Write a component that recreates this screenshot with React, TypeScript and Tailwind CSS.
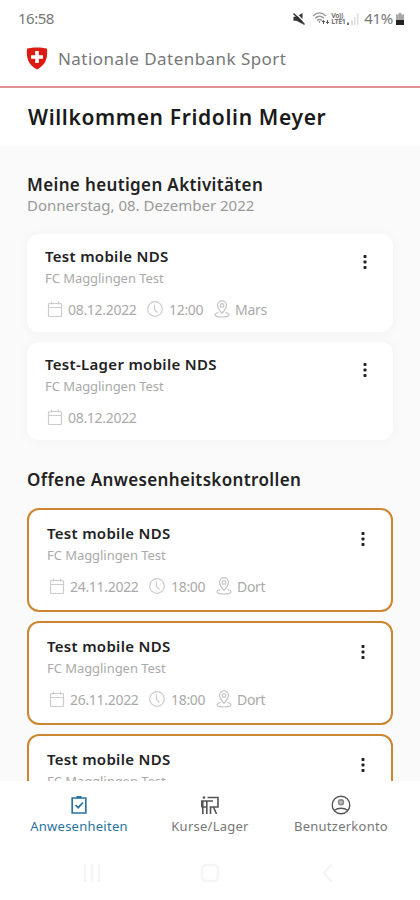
import React from 'react';

interface Activity {
  title: string;
  club: string;
  date?: string;
  time?: string;
  place?: string;
}

const todayActivities: Activity[] = [
  { title: 'Test mobile NDS', club: 'FC Magglingen Test', date: '08.12.2022', time: '12:00', place: 'Mars' },
  { title: 'Test-Lager mobile NDS', club: 'FC Magglingen Test', date: '08.12.2022' },
];

const openChecks: Activity[] = [
  { title: 'Test mobile NDS', club: 'FC Magglingen Test', date: '24.11.2022', time: '18:00', place: 'Dort' },
  { title: 'Test mobile NDS', club: 'FC Magglingen Test', date: '26.11.2022', time: '18:00', place: 'Dort' },
  { title: 'Test mobile NDS', club: 'FC Magglingen Test' },
];

const CalendarIcon = () => (
  <svg width="16" height="16" viewBox="0 0 16 16" fill="none" stroke="currentColor" strokeWidth="1.2" className="shrink-0">
    <rect x="1.5" y="2.5" width="13" height="13" rx="1" />
    <path d="M1.5 6.5h13M4.5 0.5v3M11.5 0.5v3" />
  </svg>
);

const ClockIcon = () => (
  <svg width="16" height="16" viewBox="0 0 16 16" fill="none" stroke="currentColor" strokeWidth="1.2" className="shrink-0">
    <circle cx="8" cy="8" r="7.3" />
    <path d="M7.5 3.5v5l3 3" />
  </svg>
);

const PlaceIcon = () => (
  <svg width="16" height="18" viewBox="0 0 16 18" fill="none" stroke="currentColor" strokeWidth="1.2" className="shrink-0">
    <path d="M8 13.5C6.3 11 3.5 8.5 3.5 5.3a4.5 4.5 0 0 1 9 0C12.5 8.5 9.7 11 8 13.5Z" />
    <circle cx="8" cy="5.5" r="1.8" />
    <path d="M4.5 12.5C2.5 13 1 13.6 1 14.7c0 1.4 3 2.3 7 2.3s7-.9 7-2.3c0-1.1-1.5-1.7-3.5-2.2" />
  </svg>
);

const StatusBar = () => (
  <div className="flex h-9 shrink-0 items-center justify-between pl-[18px] pr-[16px] pt-px text-[#777]">
    <span className="text-[15px] tracking-[-0.5px]">16:58</span>
    <div className="flex items-center">
      <svg width="13" height="12" viewBox="0 0 13 12" className="mr-[6px]">
        <path d="M0.5 3.8h3L9.5 0v11L3.5 7.8h-3z" fill="#333" />
        <path d="M2 -0.5l11 11" stroke="#fff" strokeWidth="1.5" />
        <path d="M0.5 0.5l11 11" stroke="#333" strokeWidth="1.5" />
      </svg>
      <svg width="18" height="13" viewBox="0 0 18 13" fill="none" stroke="#999" strokeWidth="1.3">
        <path d="M1 4c4-4 9-4 13 0M3 6.3c3-2.7 6-2.7 9 0M5 8.6c2-1.500 3.500-1.500 5 0" />
        <path d="M7.5 9v2" />
        <path d="M11.5 12V8.5M10 10l1.5-1.5L13 10M15.500 8v3.500M14 10l1.500 1.500L17 10" stroke="#555" strokeWidth="1" />
      </svg>
      <span className="ml-px flex flex-col text-[7px] font-bold leading-[6px] tracking-[-0.4px] text-[#777]">
        <span className="h-[6px]">Vo))</span>
        <span className="h-[6px]">LTE1</span>
      </span>
      <svg width="12" height="12" viewBox="0 0 12 12" fill="#ddd" className="ml-[2px]">
        <path d="M0 9.5h2V12H0z" fill="#777" />
        <path d="M4 7.5h1.8V12H4zM7 4h1.500v8H7zM10 0h1.500v12H10z" />
      </svg>
      <span className="ml-[5px] text-[15px] tracking-[-0.3px]">41%</span>
      <svg width="8" height="12" viewBox="0 0 8 12" className="ml-[3px]">
        <path d="M2.5 0h3v1.5H8V7H0V1.5h2.5z" fill="#aaa" />
        <path d="M0 7h8v5H0z" fill="#222" />
      </svg>
    </div>
  </div>
);

const Header = () => (
  <header className="flex h-[52px] shrink-0 items-center border-b-2 border-[#df9294] pb-[5px] pl-[26px]">
    <svg width="22" height="23" viewBox="0 0 22 23">
      <path d="M1 1.5C7 0 15 0 21 1.5c.8 8.5-.5 16-10 21C1.5 17.5.2 10 1 1.5Z" fill="#dc1c13" />
      <path d="M9.200 4h3.600v4.200h4.200v3.600h-4.200v4.200H9.200v-4.200H5V8.200h4.200z" fill="#fff" />
    </svg>
    <span className="ml-[10px] text-[17px] tracking-[0.45px] text-[#777]">Nationale Datenbank Sport</span>
  </header>
);

const ActivityCard = ({ activity, open }: { activity: Activity; open?: boolean }) => (
  <div
    className={
      open
        ? 'h-[104px] shrink-0 rounded-xl border-2 border-[#cd862f] bg-white pl-[18px] pr-[22px] pt-[13px]'
        : 'h-[98px] shrink-0 rounded-xl bg-white pl-[18px] pr-[22px] pt-[12px] shadow-[0_0_14px_rgba(0,0,0,0.035)]'
    }
  >
    <div className="flex justify-between">
      <div>
        <h3 className="text-[15px] font-semibold leading-5 tracking-[0.3px] text-[#222]">{activity.title}</h3>
        <p className="mt-[2px] text-[13px] leading-5 tracking-[-0.05px] text-[#aaa]">{activity.club}</p>
      </div>
      <svg width="12" height="16" viewBox="0 0 12 16" fill="#222" className="mt-[8px]">
        <rect x="4.5" y="1" width="3" height="3" rx="0.8" />
        <rect x="4.5" y="6.5" width="3" height="3" rx="0.8" />
        <rect x="4.5" y="12" width="3" height="3" rx="0.8" />
      </svg>
    </div>
    {activity.date && (
      <div className="mt-[11px] flex h-5 items-center text-[14px] tracking-[-0.3px] text-[#aaa]">
        <span className="ml-[2px] text-[#ccc]"><CalendarIcon /></span>
        <span className="ml-[5px] w-[69px]">{activity.date}</span>
        {activity.time && (
          <>
            <span className="ml-[10px] text-[#ccc]"><ClockIcon /></span>
            <span className="ml-[6px] w-[35px]">{activity.time}</span>
          </>
        )}
        {activity.place && (
          <>
            <span className="ml-[10px] text-[#c4c4c4]"><PlaceIcon /></span>
            <span className="ml-[5px]">{activity.place}</span>
          </>
        )}
      </div>
    )}
  </div>
);

const BottomNav = () => (
  <nav className="grid h-[59px] shrink-0 grid-cols-[158px_104px_158px] pt-[14px] text-[13px] text-[#777]">
    <div className="flex flex-col items-center text-[#28739e]">
      <svg width="16" height="20" viewBox="0 0 16 20" fill="none" stroke="currentColor" strokeWidth="1.7">
        <path d="M1.200 3h13.600v15H1.200z" />
        <path d="M5.500 2.200h5" strokeWidth="2.400" />
        <path d="M4.5 10l2.7 2.7L12 7.5" />
      </svg>
      <span className="mt-px leading-5 tracking-[0.25px]">Anwesenheiten</span>
    </div>
    <div className="flex flex-col items-center">
      <svg width="20" height="20" viewBox="0 0 20 20" fill="none" stroke="#555" strokeWidth="1.6">
        <circle cx="4" cy="2.500" r="1.300" fill="#555" stroke="none" />
        <path d="M7.500 2.500h10.500v9.500H9.500M1.800 12.500V6H13M2.800 6v13M6.800 6v13M2.800 12h4M10.500 12v7M13.500 12l3 7" />
      </svg>
      <span className="mt-px leading-5 tracking-[0.25px]">Kurse/Lager</span>
    </div>
    <div className="flex flex-col items-center">
      <svg width="20" height="20" viewBox="0 0 20 20" fill="none" stroke="#555" strokeWidth="1.4">
        <circle cx="10" cy="10" r="8.8" />
        <circle cx="10" cy="7.3" r="2.5" fill="#bbb" stroke="#888" />
        <path d="M3.500 15.200c3.500-2.700 9.500-2.700 13 0" />
      </svg>
      <span className="mt-px leading-5 tracking-[0.25px]">Benutzerkonto</span>
    </div>
  </nav>
);

const SystemBar = () => (
  <div className="grid h-[60px] shrink-0 grid-cols-3 items-center px-[33px] pt-[7px] pb-px text-[#f5f5f5]">
    <svg width="20" height="20" viewBox="0 0 20 20" fill="none" stroke="currentColor" strokeWidth="2.5" className="mx-auto">
      <path d="M3 1v18M10 1v18M17 1v18" />
    </svg>
    <svg width="20" height="20" viewBox="0 0 20 20" fill="none" stroke="currentColor" strokeWidth="2.5" className="mx-auto">
      <rect x="2" y="2" width="16" height="16" rx="4" />
    </svg>
    <svg width="20" height="20" viewBox="0 0 20 20" fill="none" stroke="currentColor" strokeWidth="2.5" className="mx-auto">
      <path d="M14 1L6 10l8 9" />
    </svg>
  </div>
);

const App = () => {
  return (
    <div className="flex h-[900px] w-[420px] flex-col overflow-hidden bg-white font-['Noto_Sans',sans-serif]">
      <StatusBar />
      <Header />
      <h1 className="flex h-[58px] shrink-0 items-center pl-[28px] pt-[2px] text-[21px] font-semibold tracking-[0.65px] text-[#1a1a1a]">
        Willkommen Fridolin Meyer
      </h1>

      <main className="min-h-0 flex-1 overflow-hidden bg-[#fafafa] px-[27px] pt-[28px]">
        <h2 className="text-[17px] font-semibold leading-[22px] tracking-[0.36px] text-[#222]">Meine heutigen Aktivitäten</h2>
        <p className="-mt-px text-[15px] leading-5 text-[#999]">Donnerstag, 08. Dezember 2022</p>
        <div className="mt-[19px] flex flex-col gap-[10px]">
          {todayActivities.map((activity) => (
            <ActivityCard key={activity.title} activity={activity} />
          ))}
        </div>

        <h2 className="mt-[29px] text-[17px] font-semibold leading-[22px] tracking-[0.36px] text-[#222]">Offene Anwesenheitskontrollen</h2>
        <div className="mt-[17px] flex flex-col gap-[9px]">
          {openChecks.map((activity, i) => (
            <ActivityCard key={i} activity={activity} open />
          ))}
        </div>
      </main>

      <BottomNav />
      <SystemBar />
    </div>
  );
};

export default App;
